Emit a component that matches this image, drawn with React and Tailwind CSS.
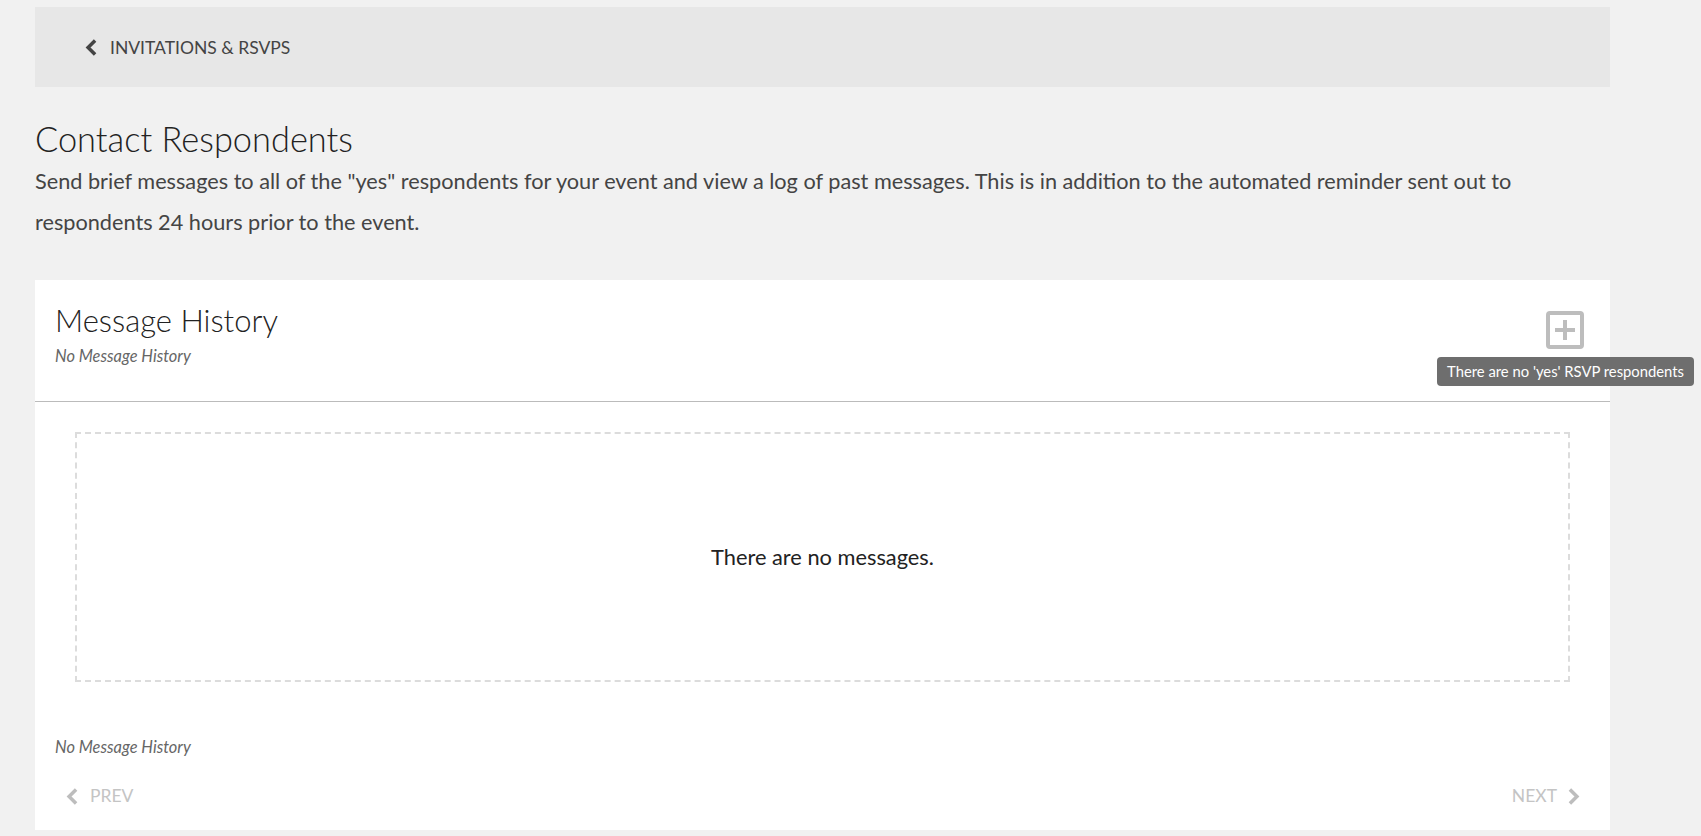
import React from "react";

function Chevron({ dir = "left", className = "" }) {
  return (
    <svg viewBox="0 0 12 16" className={className} fill="none" stroke="currentColor" strokeWidth="3">
      <path d={dir === "left" ? "M9.5 2 L3.5 8 L9.5 14" : "M2.5 2 L8.5 8 L2.5 14"} />
    </svg>
  );
}

export default function App() {
  return (
    <div className="relative h-[836px] w-[1701px] overflow-hidden bg-[#f1f1f1] pl-[35px] pt-[7px] font-['Lato',sans-serif]">
      <div className="w-[1575px]">
        <div className="flex h-[80px] items-center bg-[#e7e7e7] pl-[49px] text-[#444]">
          <Chevron className="mr-[12px] h-[19px] w-[14px] text-[#444]" />
          <span className="pt-[2px] text-[17.5px]">INVITATIONS &amp; RSVPS</span>
        </div>

        <h1 className="mt-[29px] text-[34.4px] leading-[45px] font-light text-[#222]">Contact Respondents</h1>
        <p className="text-[21.7px] leading-[41px] text-[#444]">
          Send brief messages to all of the "yes" respondents for your event and view a log of past messages. This is in addition to the automated reminder sent out to respondents 24 hours prior to the event.
        </p>

        <div className="mt-[37px] h-[550px] bg-white">
          <div className="flex h-[122px] justify-between border-b border-[#bbb] pl-[20px] pr-[26px]">
            <div>
              <h2 className="mt-[20px] text-[31px] leading-[40px] font-light text-[#222]">Message History</h2>
              <p className="mt-[5px] text-[16.4px] leading-[22px] italic text-[#666]">No Message History</p>
            </div>
            <svg viewBox="0 0 38 38" className="mt-[31px] h-[38px] w-[38px] text-[#bdbdbd]" fill="none" stroke="currentColor">
              <rect x="2" y="2" width="34" height="34" rx="2" strokeWidth="4" />
              <path d="M19 9 V29 M9 19 H29" strokeWidth="4" />
            </svg>
          </div>

          <div className="mx-[40px] mt-[30px] flex h-[250px] items-center justify-center border-2 border-dashed border-[#dcdcdc] text-[21.8px] text-[#222]">
            There are no messages.
          </div>

          <p className="mt-[54px] pl-[20px] text-[16.4px] leading-[22px] italic text-[#666]">No Message History</p>

          <div className="mt-[26px] flex justify-between pl-[30px] pr-[29px] text-[17.5px] leading-[24px] text-[#c4c4c4]">
            <div className="flex items-center gap-[11px]">
              <Chevron className="h-[19px] w-[14px] text-[#bdbdbd]" />
              <span>PREV</span>
            </div>
            <div className="flex items-center gap-[10px]">
              <span>NEXT</span>
              <Chevron dir="right" className="h-[19px] w-[14px] text-[#bdbdbd]" />
            </div>
          </div>
        </div>
      </div>

      <div className="absolute left-[1437px] top-[357px] flex h-[29px] w-[257px] items-center justify-center rounded-[4px] bg-[#6e6e6e] text-[14.8px] text-white">
        There are no 'yes' RSVP respondents
      </div>
    </div>
  );
}
